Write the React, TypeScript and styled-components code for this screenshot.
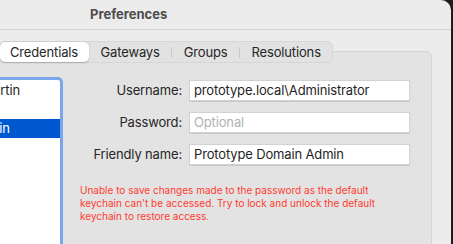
import styled, { createGlobalStyle } from "styled-components";

const GlobalStyle = createGlobalStyle`
  html, body {
    margin: 0;
    padding: 0;
    background: #1d1d1f;
    overflow: hidden;
  }
  body {
    font-family: "Inter", "Noto Sans", sans-serif;
    -webkit-font-smoothing: antialiased;
  }
`;

// the window is wider than the viewport; its left part sits off-screen
const Window = styled.div`
  width: 632px;
  height: 244px;
  margin-left: -181px;
  background: #ececec;
  border-top-right-radius: 10px;
  overflow: hidden;
  color: #262626;
  font-size: 13px;
  letter-spacing: -0.15px;
`;

const TitleBar = styled.div`
  height: 29px;
  line-height: 29px;
  padding-left: 271px;
  border-bottom: 1px solid #d3d3d3;
  font-weight: 700;
  font-size: 13px;
  letter-spacing: 0;
  color: #4d4d4d;
`;

const Main = styled.div`
  padding: 11px 19px 0 20px;
`;

const Segmented = styled.div`
  position: relative;
  z-index: 1;
  display: inline-flex;
  align-items: center;
  height: 22px;
  margin-left: 160px;
  box-sizing: border-box;
  background: #e2e2e2;
  border: 1px solid #d6d6d6;
  border-radius: 6px;
`;

const Segment = styled.div<{ $active?: boolean }>`
  position: relative;
  height: 20px;
  line-height: 20px;
  padding: ${(p) => (p.$active ? "0 11px 0 10px" : "0 11.5px")};
  border-radius: 5px;
  color: #262626;
  background: ${(p) => (p.$active ? "#ffffff" : "transparent")};
  box-shadow: ${(p) =>
    p.$active ? "0 0.5px 1.5px rgba(0,0,0,0.22)" : "none"};
`;

const Divider = styled.div`
  width: 1px;
  height: 11px;
  background: #cacaca;
`;

const GroupBox = styled.div`
  display: flex;
  margin-top: -12px;
  height: 220px;
  padding: 25px 21px 0 10px;
  background: #e3e3e3;
  border: 1px solid #d4d4d4;
  border-radius: 6px;
`;

const List = styled.div`
  width: 213px;
  height: 200px;
  flex-shrink: 0;
  box-sizing: border-box;
  padding-top: 1px;
  background: #ffffff;
  border: 3px solid #7ba6ec;
  border-radius: 5px;
`;

const ListRow = styled.div<{ $selected?: boolean }>`
  height: 19px;
  line-height: 19px;
  padding-left: 7px;
  white-space: nowrap;
  color: ${(p) => (p.$selected ? "#ffffff" : "#262626")};
  background: ${(p) => (p.$selected ? "#0058d0" : "transparent")};
`;

const Side = styled.div`
  flex: 1;
  display: flex;
  flex-direction: column;
  margin-left: 17px;
`;

const Form = styled.div`
  align-self: flex-end;
  display: grid;
  grid-template-columns: auto 221px;
  column-gap: 7px;
  row-gap: 11px;
  margin-top: 3px;
`;

const Label = styled.label`
  text-align: right;
  line-height: 21px;
  color: #262626;
`;

const Field = styled.div<{ $placeholder?: boolean }>`
  height: 21px;
  line-height: 19px;
  box-sizing: border-box;
  padding-left: 4px;
  background: #ffffff;
  border: 1px solid #d2d2d2;
  box-shadow: 0 0.5px 1px rgba(0, 0, 0, 0.12);
  color: ${(p) => (p.$placeholder ? "#b3b3b3" : "#1f1f1f")};
  white-space: nowrap;
`;

const ErrorText = styled.p`
  margin: 19px 0 0;
  font-size: 10px;
  line-height: 13px;
  letter-spacing: 0;
  color: #ff3b30;
  white-space: nowrap;
`;

export default function App() {
  return (
    <>
      <GlobalStyle />
      <Window>
        <TitleBar>Preferences</TitleBar>
        <Main>
          <Segmented>
            <Segment $active>Credentials</Segment>
            <Segment>Gateways</Segment>
            <Divider />
            <Segment>Groups</Segment>
            <Divider />
            <Segment>Resolutions</Segment>
          </Segmented>
          <GroupBox>
            <List>
              <ListRow>Prototype Jonathan Martin</ListRow>
              <ListRow>Guest</ListRow>
              <ListRow $selected>Prototype Domain Admin</ListRow>
            </List>
            <Side>
              <Form>
                <Label>Username:</Label>
                <Field>prototype.local\Administrator</Field>
                <Label>Password:</Label>
                <Field $placeholder>Optional</Field>
                <Label>Friendly name:</Label>
                <Field>Prototype Domain Admin</Field>
              </Form>
              <ErrorText>
                Unable to save changes made to the password as the default
                <br />
                keychain can't be accessed. Try to lock and unlock the default
                <br />
                keychain to restore access.
              </ErrorText>
            </Side>
          </GroupBox>
        </Main>
      </Window>
    </>
  );
}
